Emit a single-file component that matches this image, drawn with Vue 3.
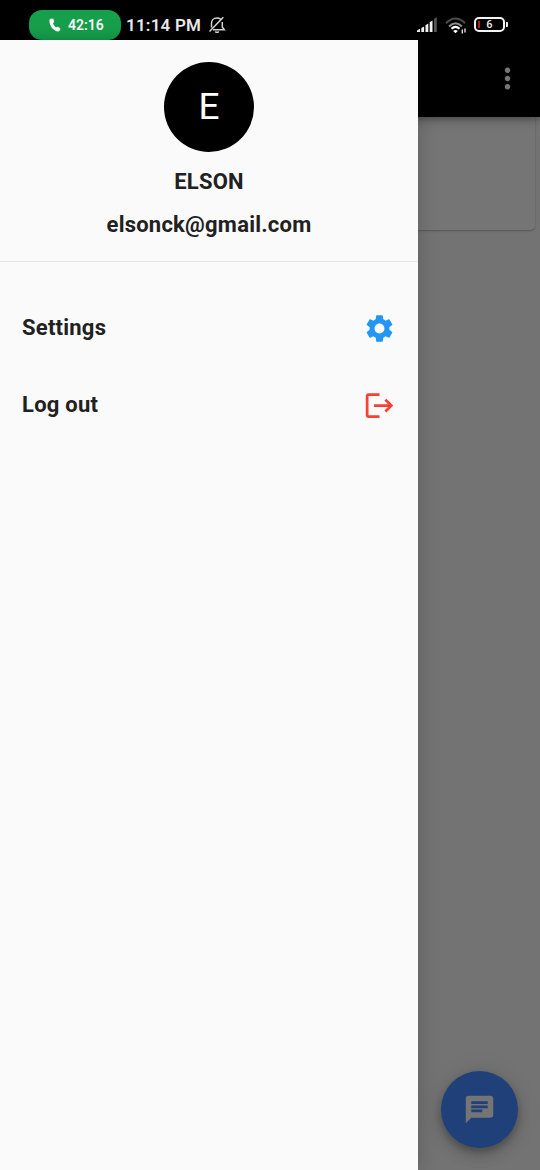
<script setup>
const items = [
  {
    label: 'Settings',
    tone: 'blue',
    path: 'M19.14 12.94c.04-.3.06-.61.06-.94 0-.32-.02-.64-.07-.94l2.03-1.58c.18-.14.23-.41.12-.61l-1.92-3.32c-.12-.22-.37-.29-.59-.22l-2.39.96c-.5-.38-1.03-.7-1.62-.94l-.36-2.54c-.04-.24-.24-.41-.48-.41h-3.84c-.24 0-.43.17-.47.41l-.36 2.54c-.59.24-1.13.57-1.62.94l-2.39-.96c-.22-.08-.47 0-.59.22L2.74 8.87c-.12.21-.08.47.12.61l2.03 1.58c-.05.3-.09.63-.09.94s.02.64.07.94l-2.03 1.58c-.18.14-.23.41-.12.61l1.92 3.32c.12.22.37.29.59.22l2.39-.96c.5.38 1.03.7 1.62.94l.36 2.54c.05.24.24.41.48.41h3.84c.24 0 .44-.17.47-.41l.36-2.54c.59-.24 1.13-.56 1.62-.94l2.39.96c.22.08.47 0 .59-.22l1.92-3.32c.12-.22.07-.47-.12-.61l-2.01-1.58zM12 15.6c-1.98 0-3.6-1.62-3.6-3.6s1.62-3.6 3.6-3.6 3.6 1.62 3.6 3.6-1.62 3.6-3.6 3.6z',
  },
  {
    label: 'Log out',
    tone: 'red',
    path: 'M17 7l-1.41 1.41L18.17 11H8v2h10.17l-2.58 2.58L17 17l5-5zM4 5h8V3H4c-1.1 0-2 .9-2 2v14c0 1.1.9 2 2 2h8v-2H4V5z',
  },
]
</script>

<template>
  <div class="screen">
    <header class="status">
      <div class="call">
        <svg class="phone" viewBox="0 0 12 14"><path d="M1.800.8 3.300.4c.6-.1 1 .2 1.200.7l.7 2.300c.1.500 0 .9-.4 1.200l-.8.7c.5 1.700 1.500 3.100 3.100 4.100l1-.6c.4-.2.800-.2 1.200.1l1.800 1.400c.4.3.5.800.2 1.300l-.8 1.200c-.4.6-1.100.8-1.900.6C4 12.200.700 8.200.4 2.900.4 1.800.8 1.100 1.800.8z" /></svg>
        <span>42:16</span>
      </div>
      <span class="clock">11:14 PM</span>
      <svg class="bell" viewBox="0 0 18 18" fill="none" stroke="#d8d8d8" stroke-width="1.500">
        <path d="M3.500 11.500V7.200C3.500 4.200 5.800 2 9 2c1.500 0 2.700.4 3.600 1.200M14.300 6V11l2 2.800H5M15.300 1.300 1.500 15.500" />
        <path d="M7.200 15.600q1.800 1.400 3.600 0" />
      </svg>
      <span class="grow"></span>
      <svg class="signal" viewBox="0 0 20 15" fill="#f2f2f2">
        <path d="M0 15v-1.500l3-1.700V15zM4.300 15v-4l2.800-1.600V15zM8.500 15V8.300l2.800-1.700V15zM12.700 15V5.300l2.800-1.900V15z" />
        <path d="M17 15V2l2.800-2v15z" fill="#555" />
      </svg>
      <svg class="wifi" viewBox="0 0 22 17" fill="none" stroke-width="2.100">
        <path d="M1 6.200Q10.500-3.200 20 6.200" stroke="#4c4c4c" />
        <path d="M4 9.600Q10.500 3 17 9.600" stroke="#8e8e8e" />
        <path d="M6.500 11.800Q10.500 7.800 14.500 11.800" stroke="#fff" />
        <path d="M8.200 13.900q2.300-1.800 4.600 0l-2.300 2.400z" fill="#fff" />
        <path d="M17.300 12.500v4M20 11.500v4" stroke="#ddd" stroke-width="1.400" />
      </svg>
      <div class="battery"><i></i><span>6</span></div>
    </header>

    <main class="page">
      <div class="appbar">
        <svg class="more" viewBox="0 0 24 24"><path d="M12 8c1.100 0 2-.9 2-2s-.9-2-2-2-2 .9-2 2 .9 2 2 2zm0 2c-1.100 0-2 .9-2 2s.9 2 2 2 2-.9 2-2-.9-2-2-2zm0 6c-1.100 0-2 .9-2 2s.9 2 2 2 2-.9 2-2-.9-2-2-2z" /></svg>
      </div>
      <div class="card"></div>
      <button class="fab">
        <svg viewBox="0 0 24 24"><path d="M20 2H4c-1.100 0-1.990.9-1.990 2L2 22l4-4h14c1.100 0 2-.9 2-2V4c0-1.100-.9-2-2-2zM6 9h12v2H6V9zm8 5H6v-2h8v2zm4-6H6V6h12v2z" /></svg>
      </button>

      <aside class="drawer">
        <div class="profile">
          <div class="avatar">E</div>
          <div class="name">ELSON</div>
          <div class="mail">elsonck@gmail.com</div>
        </div>
        <nav class="menu">
          <div v-for="item in items" :key="item.label" class="row">
            <span>{{ item.label }}</span>
            <svg :class="item.tone" viewBox="0 0 24 24"><path :d="item.path" /></svg>
          </div>
        </nav>
      </aside>
    </main>
  </div>
</template>

<style>
body { margin: 0; background: #737373; }
</style>

<style scoped>
.screen { width: 540px; height: 1170px; overflow: hidden; display: flex; flex-direction: column; font-family: Roboto, "Liberation Sans", sans-serif; background: #737373; }
.status { flex: none; height: 30px; padding: 10px 32px 0 29px; background: #000; display: flex; align-items: center; box-sizing: content-box; }
.call { width: 92px; height: 30px; border-radius: 13px; background: #17a04c; color: #fff; display: flex; align-items: center; box-sizing: border-box; padding-left: 20px; font-size: 14px; font-weight: 600; }
.phone { width: 12px; height: 14px; fill: #fff; margin-right: 7px; }
.clock { margin-left: 5px; font-size: 17px; font-weight: 600; color: #ececec; letter-spacing: 0.2px; white-space: nowrap; }
.bell { width: 18px; height: 18px; margin-left: 7px; }
.grow { flex: 1; }
.signal { width: 20px; height: 15px; margin-right: 8px; margin-bottom: 1px; }
.wifi { width: 22px; height: 17px; margin-right: 7px; }
.battery { width: 31px; height: 15px; box-sizing: border-box; border: 2px solid #f4f4f4; border-radius: 5px; position: relative; color: #eee; font-size: 11px; font-weight: 500; line-height: 12px; text-align: center; margin-right: 3px; margin-bottom: 1px; }
.battery::after { content: ""; position: absolute; right: -5px; top: 3px; width: 2px; height: 5px; border-radius: 0 1px 1px 0; background: #eee; }
.battery i { position: absolute; left: 2px; top: 2px; width: 1.500px; height: 7px; background: #b51e1e; }
.page { flex: 1; position: relative; display: flex; flex-direction: column; }
.appbar { flex: none; height: 77px; background: #000; display: flex; align-items: center; justify-content: flex-end; padding-right: 16.500px; box-sizing: border-box; box-shadow: 0 3px 5px rgba(0, 0, 0, .22), 0 5px 12px rgba(0, 0, 0, .12); z-index: 1; }
.more { width: 33px; height: 33px; fill: #757575; }
.card { height: 113px; margin: 0 5px; border-radius: 0 0 5px 5px; background: #757575; box-shadow: 0 1px 2px rgba(0, 0, 0, .25); }
.fab { position: absolute; right: 22px; bottom: 22px; width: 77px; height: 77px; padding: 0; border: 0; border-radius: 50%; background: #1f4079; display: flex; align-items: center; justify-content: center; box-shadow: 0 4px 7px rgba(0, 0, 0, .2), 0 8px 14px rgba(0, 0, 0, .13), 0 1px 24px rgba(0, 0, 0, .1); }
.fab svg { width: 33px; height: 33px; fill: #757575; }
.drawer { position: absolute; z-index: 2; inset: 0 auto 0 0; width: 418px; background: #fafafa; box-shadow: 0 0 20px rgba(0, 0, 0, .2); color: #212121; font-size: 22px; font-weight: 700; letter-spacing: 0.23px; }
.profile { height: 222px; box-sizing: border-box; padding-top: 22px; border-bottom: 1px solid #e6e6e6; display: flex; flex-direction: column; align-items: center; }
.avatar { width: 90px; height: 90px; border-radius: 50%; background: #000; color: #fff; font-size: 37px; font-weight: 400; letter-spacing: 0; line-height: 90px; text-align: center; }
.name { margin-top: 17px; line-height: 26px; }
.mail { margin-top: 17px; line-height: 26px; }
.menu { padding: 27px 22px 0; }
.row { height: 77px; display: flex; align-items: center; justify-content: space-between; }
.row svg { width: 33px; height: 33px; margin-top: 1px; }
.blue { fill: #2196f3; }
.red { fill: #f44336; }
</style>
